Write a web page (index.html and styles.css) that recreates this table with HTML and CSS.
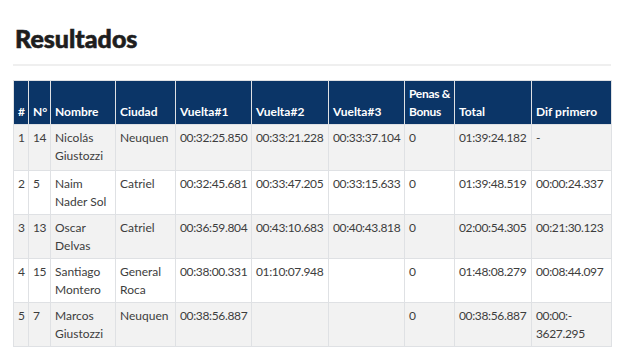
FILE: index.html
```html
<!DOCTYPE html>
<html lang="es">
<head>
<meta charset="utf-8">
<title>Resultados</title>
<link rel="stylesheet" href="styles.css">
</head>
<body>
<main class="page">
  <h1 class="title">Resultados</h1>
  <hr class="rule">
  <table class="results">
    <colgroup>
      <col class="c-pos"><col class="c-num"><col class="c-name"><col class="c-city">
      <col class="c-lap"><col class="c-lap2"><col class="c-lap"><col class="c-pen">
      <col class="c-lap2"><col class="c-dif">
    </colgroup>
    <thead>
      <tr>
        <th>#</th><th>N°</th><th>Nombre</th><th>Ciudad</th><th>Vuelta#1</th><th>Vuelta#2</th><th>Vuelta#3</th><th>Penas&nbsp;&amp; Bonus</th><th>Total</th><th>Dif primero</th>
      </tr>
    </thead>
    <tbody>
      <tr><td>1</td><td>14</td><td>Nicolás Giustozzi</td><td>Neuquen</td><td>00:32:25.850</td><td>00:33:21.228</td><td>00:33:37.104</td><td>0</td><td>01:39:24.182</td><td>-</td></tr>
      <tr><td>2</td><td>5</td><td>Naim Nader Sol</td><td>Catriel</td><td>00:32:45.681</td><td>00:33:47.205</td><td>00:33:15.633</td><td>0</td><td>01:39:48.519</td><td>00:00:24.337</td></tr>
      <tr><td>3</td><td>13</td><td>Oscar Delvas</td><td>Catriel</td><td>00:36:59.804</td><td>00:43:10.683</td><td>00:40:43.818</td><td>0</td><td>02:00:54.305</td><td>00:21:30.123</td></tr>
      <tr><td>4</td><td>15</td><td>Santiago Montero</td><td>General Roca</td><td>00:38:00.331</td><td>01:10:07.948</td><td></td><td>0</td><td>01:48:08.279</td><td>00:08:44.097</td></tr>
      <tr><td>5</td><td>7</td><td>Marcos Giustozzi</td><td>Neuquen</td><td>00:38:56.887</td><td></td><td></td><td>0</td><td>00:38:56.887</td><td>00:00:-<wbr>3627.295</td></tr>
    </tbody>
  </table>
</main>
</body>
</html>
```
FILE: styles.css
```css
html, body {
  margin: 0;
  padding: 0;
  background: #ffffff;
}
body {
  font-family: Lato, "Open Sans", "Liberation Sans", sans-serif;
  color: #3d3d3d;
}
.page {
  padding: 22px 9px 0 13px;
}
.title {
  margin: 0 0 0 2px;
  font-size: 25px;
  line-height: 32px;
  font-weight: 900;
  color: #1e1e1e;
  -webkit-text-stroke: 0.6px #1e1e1e;
}
.rule {
  margin: 10px 0 14px;
  border: 0;
  height: 2px;
  background: #efefef;
}
.results {
  width: 598px;
  table-layout: fixed;
  border-collapse: collapse;
  font-size: 12px;
  line-height: 18px;
}
.c-pos { width: 15px; }
.c-num { width: 22px; }
.c-name { width: 65px; }
.c-city { width: 60px; }
.c-lap { width: 76px; }
.c-lap2 { width: 77px; }
.c-pen { width: 50px; }
.c-dif { width: 80px; }
.results th,
.results td {
  border: 1px solid #dfe1e4;
  padding: 4px 3px 3px 4px;
  text-align: left;
  overflow-wrap: break-word;
}
.results th:nth-child(-n+2),
.results td:nth-child(-n+2) {
  white-space: nowrap;
}
.results td:nth-child(2),
.results td:nth-child(n+5) {
  letter-spacing: -0.35px;
}
.results th:nth-child(8) {
  letter-spacing: -0.3px;
}
.results th {
  background: #0b3567;
  color: #ffffff;
  font-weight: 700;
  vertical-align: bottom;
  padding-bottom: 3px;
}
.results td {
  vertical-align: top;
  height: 36px;
}
.results tbody tr:first-child td {
  padding-bottom: 5px;
}
.results tbody tr:nth-child(odd) td {
  background: #f2f2f2;
}
.results tbody tr:nth-child(even) td {
  background: #ffffff;
}
```
